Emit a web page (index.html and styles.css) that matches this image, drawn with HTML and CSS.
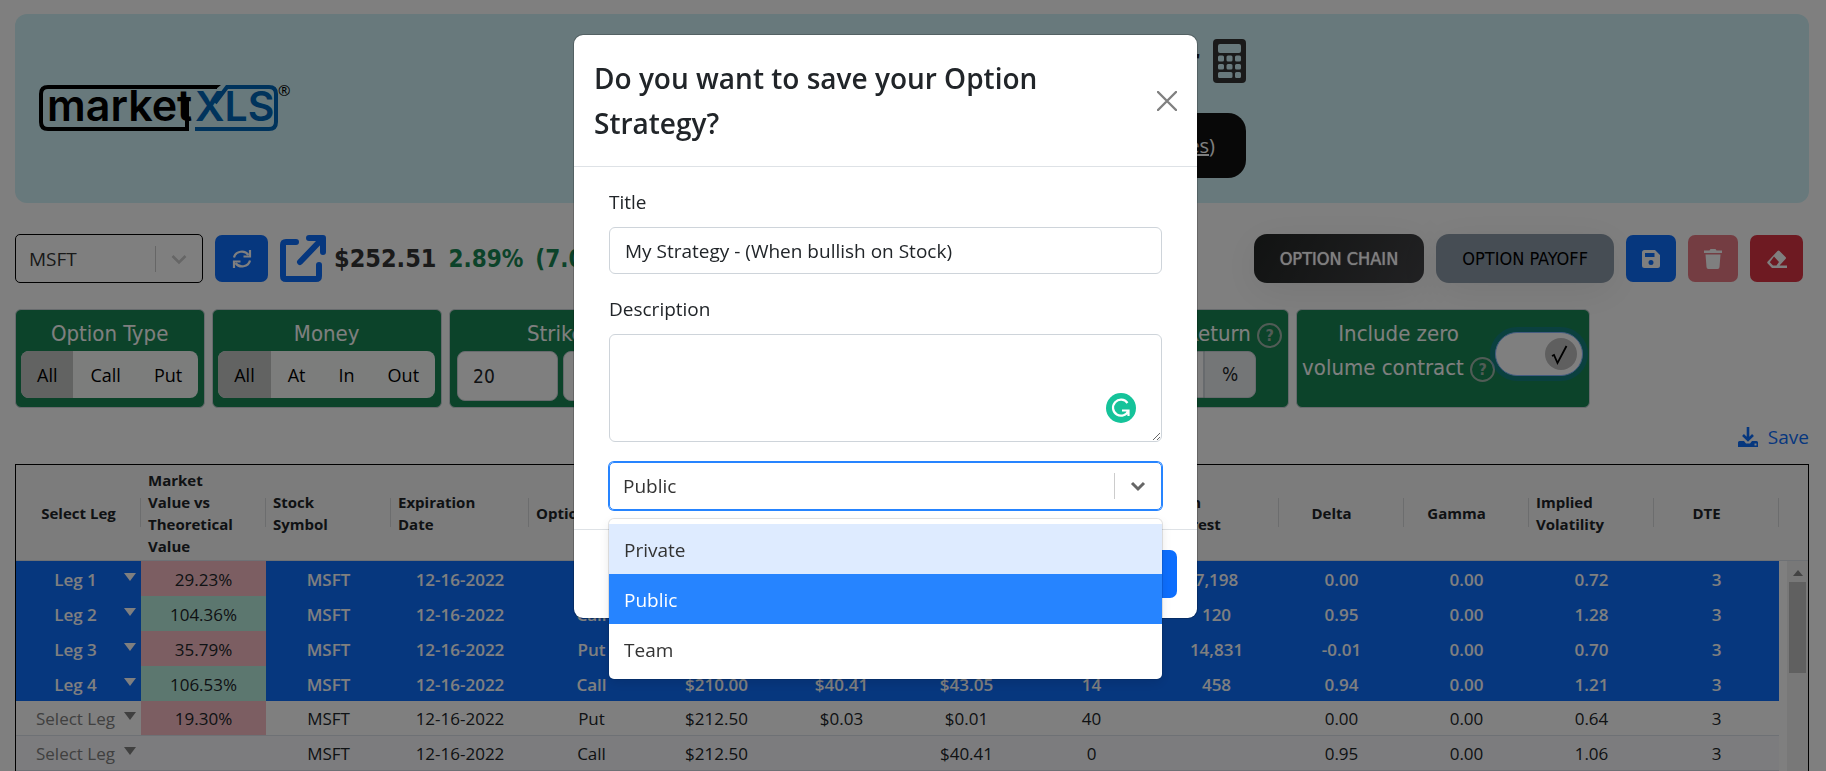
FILE: index.html
```html
<!DOCTYPE html>
<html lang="en">
<head>
    <meta charset="UTF-8">
    <meta name="viewport" content="width=device-width, initial-scale=1.0">
    <title>MarketXLS Option Strategy</title>
    <link rel="stylesheet" href="styles.css">
</head>
<body>
    <main class="page">
        <header class="banner">
            <svg class="logo" width="260" height="60" viewBox="-2 4 260 60" role="img" aria-label="marketXLS">
                <path d="M182 12H13Q6 12 6 19V47Q6 54 13 54H152V24" fill="none" stroke="#000" stroke-width="4"/>
                <path d="M178 14L182 10H186L181 14Z" fill="#000"/>
                <text class="logo-market" x="12" y="46">market</text>
                <text class="logo-xls" x="160" y="46">XLS</text>
                <path d="M180 28L192 12H234Q241 12 241 19V47Q241 54 234 54H160" fill="none" stroke="#0067b8" stroke-width="4"/>
                <text class="logo-reg" x="243" y="21">®</text>
            </svg>
            <div class="banner-main">
                <h1 class="banner-title">
                    <span>Option Profit Calculator</span>
                    <svg width="33" height="44" viewBox="0 0 33 44" fill="#343434">
                        <path fill-rule="evenodd" d="M4 0H29Q33 0 33 4V40Q33 44 29 44H4Q0 44 0 40V4Q0 0 4 0ZM7 5Q5 5 5 7V12Q5 14 7 14H26Q28 14 28 12V7Q28 5 26 5ZM6.500 16.500Q5 16.500 5 18V21Q5 22.500 6.500 22.500H9.500Q11 22.500 11 21V18Q11 16.500 9.500 16.500ZM15 16.500Q13.500 16.500 13.500 18V21Q13.500 22.500 15 22.500H18Q19.500 22.500 19.500 21V18Q19.500 16.500 18 16.500ZM23.500 16.500Q22 16.500 22 18V21Q22 22.500 23.500 22.500H26.500Q28 22.500 28 21V18Q28 16.500 26.500 16.500ZM6.500 25Q5 25 5 26.500V29Q5 30.500 6.500 30.500H9.500Q11 30.500 11 29V26.500Q11 25 9.500 25ZM15 25Q13.500 25 13.500 26.500V29Q13.500 30.500 15 30.500H18Q19.500 30.500 19.500 29V26.500Q19.500 25 18 25ZM23.500 25Q22 25 22 26.500V29Q22 30.500 23.500 30.500H26.500Q28 30.500 28 29V26.500Q28 25 26.500 25ZM6.500 33Q5 33 5 34.500V37.500Q5 39 6.500 39H18Q19.500 39 19.500 37.500V34.500Q19.500 33 18 33ZM23.500 33Q22 33 22 34.500V37.500Q22 39 23.500 39H26.500Q28 39 28 37.500V34.500Q28 33 26.500 33Z"/>
                    </svg>
                </h1>
                <a class="banner-link" href="#">Book a demo (30 minutes)</a>
            </div>
        </header>

        <section class="toolbar">
            <div class="symbol-select">
                <select aria-label="Symbol"><option>MSFT</option></select>
                <span class="divider"></span>
                <svg class="chevron" width="20" height="20" viewBox="0 0 20 20"><path d="M3.500 7L10 13.500L16.500 7" fill="none" stroke="currentColor" stroke-width="2.600"/></svg>
            </div>
            <button class="btn btn-primary btn-refresh" aria-label="Refresh">
                <svg width="20" height="20" viewBox="0 0 20 20" fill="none" stroke="#fff" stroke-width="2.200">
                    <path d="M2 8.500A8 7.500 0 0 1 16.500 6M18 11.500A8 7.500 0 0 1 3.500 14"/>
                    <path d="M18 1V7.500H11.500M2 19V12.500H8.500"/>
                </svg>
            </button>
            <a class="external" href="#" aria-label="Open quote">
                <svg width="46" height="47" viewBox="0 0 46 47" fill="none" stroke="#0d6efd" stroke-width="6" stroke-linecap="round" stroke-linejoin="round">
                    <path d="M16 7H6Q3 7 3 10V41Q3 44 6 44H36Q39 44 39 41V30"/>
                    <path d="M29 3H43V17M42 4L20 27"/>
                </svg>
            </a>
            <span class="price">$252.51</span>
            <span class="change">2.89%</span>
            <span class="change">(7.09)</span>
            <div class="toolbar-right">
                <button class="pill pill-dark">OPTION CHAIN</button>
                <button class="pill pill-slate">OPTION PAYOFF</button>
                <button class="btn btn-primary btn-icon" aria-label="Save strategy">
                    <svg width="18" height="18" viewBox="0 0 18 18" fill="#fff"><path fill-rule="evenodd" d="M2.500 0H13L18 5V15.500Q18 18 15.500 18H2.500Q0 18 0 15.500V2.500Q0 0 2.500 0ZM3 3V7H12.500V3ZM9 10A2.500 2.500 0 1 0 9 15A2.500 2.500 0 1 0 9 10Z"/></svg>
                </button>
                <button class="btn btn-danger btn-icon" aria-label="Delete" disabled>
                    <svg width="18" height="20" viewBox="0 0 18 20" fill="#fff"><path d="M0 1.500H5.500L6.500 0H11.500L12.500 1.500H18V4H0ZM1.500 5.500H16.500L15.500 18Q15.500 20 13.500 20H4.500Q2.500 20 2.500 18Z"/></svg>
                </button>
                <button class="btn btn-danger btn-erase" aria-label="Clear">
                    <svg width="20" height="18" viewBox="0 0 20 18" fill="#fff"><path fill-rule="evenodd" d="M10.500 1Q11.500 0 12.500 1L18.500 7Q19.500 8 18.500 9L12.500 15.500H20V18H5L.700 13.500Q-.300 12.500 .700 11.500ZM7 6.500L2.800 12.200L6 15.500H9.500L12 12Z"/></svg>
                </button>
            </div>
        </section>

        <section class="filters">
            <div class="card">
                <h2>Option Type</h2>
                <div class="segment">
                    <button class="active">All</button><button>Call</button><button>Put</button>
                </div>
            </div>
            <div class="card">
                <h2>Money</h2>
                <div class="segment">
                    <button class="active">All</button><button>At</button><button>In</button><button>Out</button>
                </div>
            </div>
            <div class="card">
                <h2>Strikes</h2>
                <div class="range">
                    <input type="text" value="20" aria-label="Strikes from">
                    <input type="text" value="" aria-label="Strikes to">
                </div>
            </div>
            <div class="card card-wide">
                <h2>Expiration</h2>
                <div class="input-group">
                    <input type="text" aria-label="Expiration">
                </div>
            </div>
            <div class="card card-wide card-return">
                <h2>Minimum Return <span class="help">?</span></h2>
                <div class="input-group">
                    <input type="text" aria-label="Return"><span class="addon">%</span>
                </div>
            </div>
            <div class="card card-zero">
                <h2><label for="zero-volume">Include zero<br>volume contract <span class="help">?</span></label></h2>
                <span class="toggle">
                    <input type="checkbox" id="zero-volume" checked>
                    <svg class="knob" width="32" height="32" viewBox="0 0 32 32">
                        <circle cx="16" cy="16" r="16" fill="#bfbfbf"/>
                        <path d="M7 18L9 17L12.500 25L21.500 8" fill="none" stroke="#000" stroke-width="1.800"/>
                    </svg>
                </span>
            </div>
        </section>

        <div class="actions">
            <a class="save-link" href="#">
                <svg width="20" height="20" viewBox="0 0 20 20" fill="#0d6efd">
                    <path fill-rule="evenodd" d="M1.500 14H6L8 16.500H12L14 14H18.500Q20 14 20 15.500V20H0V15.500Q0 14 1.500 14ZM16.500 16.500V18.500H18.500V16.500Z"/>
                    <path d="M10 0V13M5 8L10 13L15 8" fill="none" stroke="#0d6efd" stroke-width="2.600"/>
                </svg>
                Save
            </a>
        </div>

        <section class="grid">
            <div class="grid-main">
                <table class="chain">
                    <thead>
                        <tr>
                            <th class="first">Select Leg</th>
                            <th>Market Value vs Theoretical Value</th>
                            <th>Stock Symbol</th>
                            <th class="wide">Expiration Date</th>
                            <th>Option Type</th>
                            <th class="single">Strike</th>
                            <th class="single">Bid</th>
                            <th class="single">Ask</th>
                            <th class="single">Volume</th>
                            <th>Open Interest</th>
                            <th class="single">Delta</th>
                            <th class="single">Gamma</th>
                            <th>Implied Volatility</th>
                            <th class="single">DTE</th>
                        </tr>
                    </thead>
                    <tbody>
                        <tr class="selected">
                            <td><div class="leg"><select aria-label="Leg"><option>Leg 1</option></select><i></i></div></td>
                            <td class="low">29.23%</td><td>MSFT</td><td>12-16-2022</td><td>Put</td><td>$200.00</td><td>$0.01</td><td>$0.02</td><td>25</td><td>7,198</td><td>0.00</td><td>0.00</td><td>0.72</td><td>3</td>
                        </tr>
                        <tr class="selected">
                            <td><div class="leg"><select aria-label="Leg"><option>Leg 2</option></select><i></i></div></td>
                            <td class="high">104.36%</td><td>MSFT</td><td>12-16-2022</td><td>Call</td><td>$200.00</td><td>$50.30</td><td>$53.00</td><td>12</td><td>120</td><td>0.95</td><td>0.00</td><td>1.28</td><td>3</td>
                        </tr>
                        <tr class="selected">
                            <td><div class="leg"><select aria-label="Leg"><option>Leg 3</option></select><i></i></div></td>
                            <td class="low">35.79%</td><td>MSFT</td><td>12-16-2022</td><td>Put</td><td>$210.00</td><td>$0.01</td><td>$0.03</td><td>68</td><td>14,831</td><td>-0.01</td><td>0.00</td><td>0.70</td><td>3</td>
                        </tr>
                        <tr class="selected">
                            <td><div class="leg"><select aria-label="Leg"><option>Leg 4</option></select><i></i></div></td>
                            <td class="high">106.53%</td><td>MSFT</td><td>12-16-2022</td><td>Call</td><td>$210.00</td><td>$40.41</td><td>$43.05</td><td>14</td><td>458</td><td>0.94</td><td>0.00</td><td>1.21</td><td>3</td>
                        </tr>
                        <tr>
                            <td><div class="leg"><select aria-label="Leg"><option>Select Leg</option></select><i></i></div></td>
                            <td class="low">19.30%</td><td>MSFT</td><td>12-16-2022</td><td>Put</td><td>$212.50</td><td>$0.03</td><td>$0.01</td><td>40</td><td></td><td>0.00</td><td>0.00</td><td>0.64</td><td>3</td>
                        </tr>
                        <tr class="odd">
                            <td><div class="leg"><select aria-label="Leg"><option>Select Leg</option></select><i></i></div></td>
                            <td></td><td>MSFT</td><td>12-16-2022</td><td>Call</td><td>$212.50</td><td></td><td>$40.41</td><td>0</td><td></td><td>0.95</td><td>0.00</td><td>1.06</td><td>3</td>
                        </tr>
                    </tbody>
                </table>
            </div>
            <div class="grid-side">
                <div class="grid-side-head"></div>
                <div class="scrollbar"><span class="scroll-up"></span><span class="scroll-thumb"></span></div>
            </div>
        </section>
    </main>

    <div class="backdrop">
        <div class="modal" role="dialog" aria-labelledby="modal-title">
            <div class="modal-header">
                <h2 id="modal-title">Do you want to save your Option Strategy?</h2>
                <button class="close" aria-label="Close">
                    <svg width="20" height="20" viewBox="0 0 20 20"><path d="M1 1L19 19M19 1L1 19" stroke="#808080" stroke-width="2.400" stroke-linecap="round"/></svg>
                </button>
            </div>
            <div class="modal-body">
                <label for="title">Title</label>
                <input class="control" type="text" id="title" value="My Strategy - (When bullish on Stock)">
                <label for="description">Description</label>
                <div class="textarea-wrap">
                    <textarea class="control" id="description"></textarea>
                    <svg class="checker" width="30" height="30" viewBox="0 0 30 30">
                        <circle cx="15" cy="15" r="15" fill="#15c39a"/>
                        <path d="M21.500 10A8 8 0 1 0 22.500 17.500M16 17.500H22.500V23" fill="none" stroke="#fff" stroke-width="2.200"/>
                    </svg>
                </div>
                <div class="visibility">
                    <select aria-label="Visibility"><option>Private</option><option selected>Public</option><option>Team</option></select>
                    <span class="divider"></span>
                    <svg class="chevron" width="20" height="20" viewBox="0 0 20 20"><path d="M4 7L10 13L16 7" fill="none" stroke="currentColor" stroke-width="3"/></svg>
                    <ul class="menu" role="listbox">
                        <li class="focused" role="option">Private</li>
                        <li class="chosen" role="option">Public</li>
                        <li role="option">Team</li>
                    </ul>
                </div>
            </div>
            <div class="modal-footer">
                <button class="btn btn-primary btn-save">Save</button>
            </div>
        </div>
    </div>
</body>
</html>
```
FILE: styles.css
```css
* {
    box-sizing: border-box;
}
body {
    margin: 0;
    height: 100vh;
    overflow: hidden;
    background: #fff;
    color: #212529;
    font-family: "Open Sans", "Noto Sans", sans-serif;
    font-size: 19px;
    line-height: 30px;
}
button, input, select, textarea {
    font: inherit;
    color: inherit;
}
button {
    border: none;
    padding: 0;
}
select {
    appearance: none;
    border: none;
    background: transparent;
    outline: none;
    padding: 0;
}
.page {
    padding: 14px 17px 0 15px;
}

/* banner */
.banner {
    display: grid;
    grid-template-columns: 1fr 668px 1fr;
    height: 189px;
    background: #d0f2f8;
    border-radius: 12px;
}
.logo {
    align-self: center;
    margin-left: 18px;
}
.logo-market, .logo-xls {
    font-family: Inter, sans-serif;
    font-weight: 600;
}
.logo-market {
    font-size: 43px;
}
.logo-xls {
    font-size: 41px;
    fill: #0067b8;
}
.logo-reg {
    font-size: 15px;
}
.banner-main {
    display: flex;
    flex-direction: column;
    align-items: flex-end;
    gap: 24px;
    padding-top: 19px;
}
.banner-title {
    display: flex;
    align-items: center;
    gap: 13px;
    height: 56px;
    margin: 0;
    font-size: 40px;
    font-weight: 600;
}
.banner-link {
    display: flex;
    align-items: center;
    height: 65px;
    padding: 0 31px;
    border-radius: 18px;
    background: #101010;
    color: #fff;
    font-size: 20px;
}

/* toolbar */
.toolbar {
    display: flex;
    align-items: center;
    gap: 12px;
    height: 49px;
    margin-top: 31px;
    font-family: "DejaVu Sans Condensed", "DejaVu Sans", sans-serif;
}
.symbol-select {
    display: flex;
    align-items: center;
    width: 188px;
    height: 49px;
    padding: 0 13px;
    border: 1px solid #000;
    border-radius: 5px;
    color: #333;
    font-family: "Open Sans", sans-serif;
}
.symbol-select select {
    flex: 1;
    min-width: 0;
}
.divider {
    width: 1px;
    height: 26px;
    background: #ccc;
}
.symbol-select .chevron {
    margin-left: 13px;
    color: #ccc;
}
.btn {
    display: flex;
    align-items: center;
    justify-content: center;
    height: 47px;
    border-radius: 7px;
    color: #fff;
}
.btn-primary {
    background: #0d6efd;
}
.btn-danger {
    background: #dc3545;
}
.btn-danger:disabled {
    opacity: 0.65;
}
.btn-refresh, .btn-erase {
    width: 53px;
}
.btn-icon {
    width: 50px;
}
.external {
    display: flex;
}
.price {
    margin-left: -4px;
    color: #343434;
    font-size: 25px;
    font-weight: 700;
}
.change {
    color: #198754;
    font-size: 24px;
    font-weight: 700;
}
.toolbar-right {
    display: flex;
    align-items: center;
    gap: 12px;
    margin: 0 6px 0 auto;
}
.pill {
    height: 49px;
    padding: 0 26px;
    border-radius: 13px;
    font-size: 18px;
    box-shadow: 0 8px 40px rgba(0, 0, 0, 0.08);
}
.pill-dark {
    background: linear-gradient(120deg, #232625, #434346);
    color: #fff;
    text-shadow: 0 0 1px #fff;
}
.pill-slate {
    background: #8c9aa8;
    color: #000;
}

/* filters */
.filters {
    display: flex;
    gap: 7px;
    margin-top: 26px;
    font-family: "DejaVu Sans Condensed", "DejaVu Sans", sans-serif;
}
.card {
    height: 99px;
    padding: 7px 6px 7px 5px;
    border: 1px solid #ced4da;
    border-radius: 6px;
    background: #198754;
}
.card h2 {
    margin: 0;
    color: #fff;
    font-size: 22px;
    font-weight: 400;
    line-height: 34px;
    text-align: center;
    white-space: nowrap;
}
.segment {
    display: flex;
    gap: 1px;
    height: 47px;
    border-radius: 8px;
    overflow: hidden;
    background: #f8faf9;
    color: #000;
}
.segment button {
    padding: 0 16px;
    background: transparent;
    font-family: "Open Sans", sans-serif;
    font-size: 18px;
}
.segment .active {
    background: #c4c6c5;
}
.range {
    display: flex;
    gap: 5px;
    padding: 0 2px;
}
.range input {
    width: 101px;
    height: 50px;
    padding: 0 15px;
    border: 1px solid #ced4da;
    border-radius: 8px;
    background: #fff;
}
.card-wide {
    width: 301px;
}
.card-return h2 {
    text-align: right;
}
.card-zero {
    display: flex;
    align-items: flex-start;
}
.help {
    display: inline-block;
    width: 25px;
    height: 25px;
    border: 2px solid #a3b8ad;
    border-radius: 50%;
    color: #a3b8ad;
    font-size: 16px;
    font-weight: 700;
    line-height: 21px;
    text-align: center;
    vertical-align: middle;
}
.input-group {
    display: flex;
    height: 47px;
    margin-right: 26px;
}
.input-group input {
    flex: 1;
    min-width: 0;
    border: 1px solid #ced4da;
    border-radius: 8px 0 0 8px;
}
.addon {
    width: 52px;
    border: 1px solid #ced4da;
    border-radius: 0 8px 8px 0;
    background: #e9ecef;
    line-height: 45px;
    text-align: center;
}
.toggle {
    position: relative;
    width: 88px;
    height: 44px;
    margin-top: 15px;
}
.toggle input {
    appearance: none;
    width: 88px;
    height: 44px;
    margin: 0;
    border: 1px solid #86b7fe;
    border-radius: 22px;
    background: #fff;
    box-shadow: 0 0 0 5px rgba(13, 110, 253, 0.25);
}
.knob {
    position: absolute;
    top: 6px;
    right: 6px;
    pointer-events: none;
}

.actions {
    display: flex;
    justify-content: flex-end;
    height: 56px;
    padding-top: 14px;
}
.save-link {
    display: flex;
    align-items: center;
    gap: 10px;
    height: 30px;
    color: #0d6efd;
    text-decoration: none;
}

/* option chain */
.grid {
    display: flex;
    border: 1px solid #000;
}
.grid-main {
    flex: 1;
    min-width: 0;
}
.chain {
    width: 100%;
    table-layout: fixed;
    border-spacing: 0;
    font-size: 17px;
    font-weight: 500;
}
.chain th {
    position: relative;
    height: 96px;
    padding: 0 20px 0 7px;
    background: #f8f8f8;
    border-bottom: 1px solid #dde2eb;
    font-size: 15px;
    font-weight: 700;
    line-height: 22px;
    text-align: left;
}
.chain th::after {
    content: '';
    position: absolute;
    right: 0;
    top: 33px;
    width: 1px;
    height: 29px;
    background: #d8dadd;
}
.chain .first {
    padding: 0;
    text-align: center;
}
.chain .single {
    padding: 0 20px 0 0;
    text-align: center;
}
.chain .wide {
    width: 138px;
}
.chain td {
    height: 35px;
    padding: 2px 0 0;
    border-bottom: 1px solid #dde2eb;
    line-height: 22px;
    text-align: center;
}
.chain .odd {
    background: #f8f9fc;
}
.chain .selected {
    background: #0d6efd;
    color: #fff;
    font-weight: 600;
}
.chain .selected td {
    border-bottom: none;
}
.chain .low, .chain .high {
    color: #212529;
    font-weight: 400;
}
.chain .low {
    background: #f8bdc5;
}
.chain .high {
    background: #b9efdf;
}
.leg {
    display: flex;
    align-items: center;
    padding: 0 5px;
    color: #808080;
}
.leg select {
    flex: 1;
    min-width: 0;
    padding-left: 6px;
    text-align-last: center;
}
.leg i {
    border: 6px solid transparent;
    border-top: 8px solid currentColor;
    border-bottom: none;
    margin-bottom: 6px;
}
.selected .leg {
    color: #fff;
}
.grid-side {
    display: flex;
    flex-direction: column;
    width: 29px;
}
.grid-side-head {
    height: 96px;
    background: #f8f8f8;
    border-bottom: 1px solid #dde2eb;
}
.scrollbar {
    flex: 1;
    display: flex;
    flex-direction: column;
    align-items: center;
    gap: 6px;
    width: 21px;
    margin-left: 8px;
    padding-top: 9px;
    background: #f1f1f1;
}
.scroll-up {
    border: 5px solid transparent;
    border-top: none;
    border-bottom: 6px solid #868686;
}
.scroll-thumb {
    width: 17px;
    height: 91px;
    background: #c1c1c1;
}

/* save dialog */
.backdrop {
    position: fixed;
    inset: 0;
    padding: 34px 55px 0 0;
    background: rgba(0, 0, 0, 0.5);
}
.modal {
    width: 625px;
    max-width: 100%;
    margin: 0 auto;
    border: 1px solid rgba(0, 0, 0, 0.2);
    border-radius: 10px;
    background: #fff;
    background-clip: padding-box;
}
.modal-header {
    display: flex;
    align-items: center;
    justify-content: space-between;
    padding: 21px 20px 20px;
    border-bottom: 1px solid #dee2e6;
}
.modal-header h2 {
    flex: 1;
    margin: 0;
    padding-right: 60px;
    font-size: 28px;
    font-weight: 600;
    line-height: 45px;
}
.close {
    display: flex;
    background: transparent;
}
.modal-body {
    padding: 20px 35px 19px;
}
.modal-body label {
    display: block;
    margin-bottom: 10px;
}
.control {
    display: block;
    width: 100%;
    height: 47px;
    margin-bottom: 20px;
    padding: 0 15px;
    border: 1px solid #ced4da;
    border-radius: 6px;
    background: #fff;
}
.textarea-wrap {
    position: relative;
}
textarea.control {
    height: 108px;
    padding: 8px 15px;
    resize: both;
}
.checker {
    position: absolute;
    right: 26px;
    bottom: 19px;
}
.visibility {
    position: relative;
    display: flex;
    align-items: center;
    height: 48px;
    padding: 0 13px;
    border: 1px solid #2684ff;
    border-radius: 5px;
    box-shadow: 0 0 0 1px #2684ff;
    color: #333;
}
.visibility select {
    flex: 1;
}
.visibility .chevron {
    margin-left: 13px;
    color: #666;
}
.menu {
    position: absolute;
    top: 56px;
    left: -1px;
    right: -1px;
    margin: 0;
    padding: 5px 0;
    border-radius: 5px;
    background: #fff;
    box-shadow: 0 0 0 1px rgba(0, 0, 0, 0.1), 0 4px 11px rgba(0, 0, 0, 0.1);
    list-style: none;
}
.menu li {
    padding: 11px 15px 9px;
}
.menu .focused {
    background: #deebff;
}
.menu .chosen {
    background: #2684ff;
    color: #fff;
}
.modal-footer {
    display: flex;
    justify-content: flex-end;
    padding: 20px;
    border-top: 1px solid #dee2e6;
}
.btn-save {
    height: 48px;
    padding: 0 16px;
}
```
